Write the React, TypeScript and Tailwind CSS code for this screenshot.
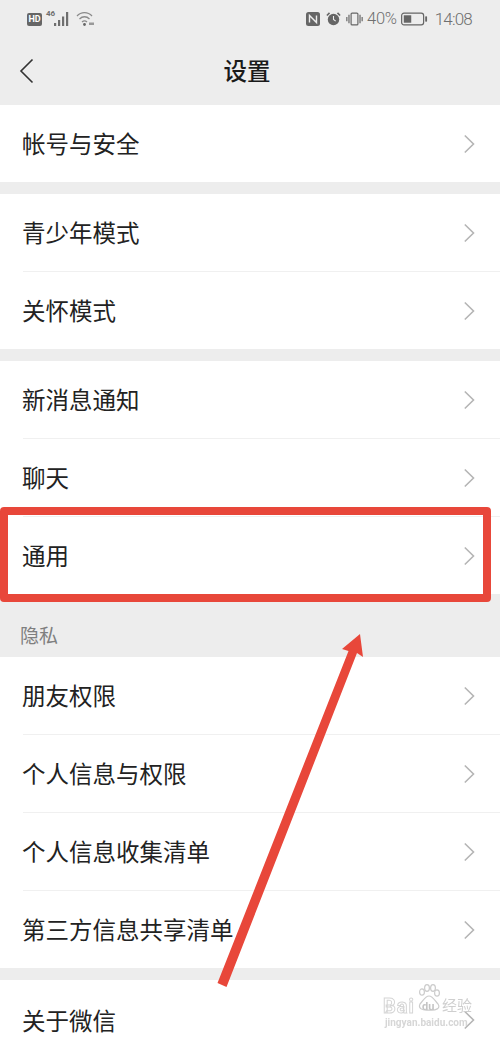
const FONT = "font-['Roboto','Noto_Sans_CJK_SC',sans-serif]";

function Chevron() {
  return (
    <svg width="12" height="20" viewBox="0 0 12 20" fill="none" className="shrink-0">
      <path d="M1.8 1.5 L10.5 10 L1.8 18.5" stroke="#b5b5b5" strokeWidth="1.6" />
    </svg>
  );
}

function Row({ label, divider = false, height = 'h-[77px]' }: { label: string; divider?: boolean; height?: string }) {
  return (
    <div className={`bg-white pl-[23px] ${height}`}>
      <div className={`h-full flex items-center justify-between pr-[25px] ${divider ? 'border-b border-[#f0f0f0]' : ''}`}>
        <span className="text-[23.5px] leading-none text-[#222222] -ml-[1px] pt-[5px]">{label}</span>
        <Chevron />
      </div>
    </div>
  );
}

function StatusBar() {
  return (
    <div className="h-[38px] flex items-center justify-between pl-[27px] pr-[28px] text-[#6f6f6f]">
      <div className="flex items-center gap-[4px]">
        <span className="w-[15px] h-[13px] rounded-[2px] bg-[#666666] text-white text-[9px] font-bold leading-[13px] text-center">HD</span>
        <div className="relative w-[24px] h-[16px]">
          <span className="absolute left-[0px] top-[-2px] text-[8px] font-bold leading-[10px]">46</span>
          <svg width="24" height="16" viewBox="0 0 24 16" className="absolute left-0 top-0" fill="#6f6f6f">
            <rect x="8" y="12" width="2.2" height="3" />
            <rect x="12" y="9" width="2.2" height="6" />
            <rect x="16" y="5.5" width="2.2" height="9.5" />
            <rect x="20" y="1" width="2.2" height="14" />
          </svg>
        </div>
        <svg width="20" height="16" viewBox="0 0 20 16" fill="none" stroke="#8a8a8a" strokeWidth="1.3" className="ml-[2px]">
          <path d="M1 5 C5 0.5 12 0.5 16 5" />
          <path d="M3.5 8 C6.5 5 10.5 5 13.5 8" />
          <path d="M6 11 C7.5 9.6 9.5 9.6 11 11" />
          <circle cx="8.5" cy="13.5" r="1.4" fill="#666666" stroke="none" />
          <rect x="13" y="11.5" width="5" height="2.5" fill="#999999" stroke="none" />
        </svg>
      </div>
      <div className="flex items-center text-[16px] leading-none">
        <svg width="14" height="14" viewBox="0 0 14 14" className="mr-[6px]">
          <rect width="14" height="14" rx="2.5" fill="#666666" />
          <path d="M3.5 10.5 V3.5 L10.5 10.5 V3.5" fill="none" stroke="#ededed" strokeWidth="1.4" />
        </svg>
        <svg width="15" height="16" viewBox="0 0 17 16" className="mr-[5px]">
          <circle cx="8.5" cy="8.5" r="6.5" fill="#666666" />
          <path d="M8.5 4.5 V8.5 L11 10.5" fill="none" stroke="#ededed" strokeWidth="1.2" />
          <path d="M1 4 L4 1 M16 4 L13 1" stroke="#666666" strokeWidth="1.8" />
        </svg>
        <svg width="17" height="16" viewBox="0 0 20 16" fill="none" stroke="#666666" className="mr-[4px]">
          <rect x="6" y="1" width="8" height="14" rx="1.2" strokeWidth="1.4" />
          <path d="M3.5 3 V13 M1 5.5 V10.5 M16.5 3 V13 M19 5.5 V10.5" strokeWidth="1.4" />
        </svg>
        <span className="font-light text-[16.5px] tracking-[-0.3px]">40%</span>
        <svg width="27" height="14" viewBox="0 0 29 14" fill="none" className="ml-[4px] mr-[7px]">
          <rect x="0.7" y="0.7" width="23.6" height="12.6" rx="2.5" stroke="#666666" strokeWidth="1.3" />
          <rect x="3" y="3" width="8" height="8" fill="#666666" />
          <rect x="26" y="4" width="2" height="6" rx="0.8" fill="#666666" />
        </svg>
        <span className="font-light text-[17px] tracking-[-0.8px]">14:08</span>
      </div>
    </div>
  );
}

function Header() {
  return (
    <div className="relative h-[67px] flex items-center justify-center">
      <svg width="16" height="26" viewBox="0 0 16 26" fill="none" className="absolute left-[19px] top-[20px]">
        <path d="M13.5 1.5 L2 13 L13.5 24.5" stroke="#333333" strokeWidth="1.6" />
      </svg>
      <span className="text-[23.5px] leading-none font-medium text-[#1a1a1a] pt-[3px] -translate-x-[3px]">设置</span>
    </div>
  );
}

function Overlays() {
  return (
    <>
      {/* red highlight */}
      <div className="absolute left-0 top-[507px] w-[491px] h-[95px] border-[8px] border-[#e8473a] rounded-[4px]" />
      {/* arrow */}
      <svg width="500" height="1039" viewBox="0 0 500 1039" className="absolute left-0 top-0 pointer-events-none">
        <polygon points="217.5,983 226.5,987 357,653 363,657 360,634 342,649 348.5,651" fill="#e8473a" />
      </svg>
      {/* watermark */}
      <div className="absolute left-[383px] top-[984px] w-[117px] h-[55px] blur-[0.4px]">
        <svg width="24" height="28" viewBox="0 0 24 28" className="absolute left-[34px] top-[0px]" fill="#ffffff" stroke="#cccccc" strokeWidth="1.2">
          <ellipse cx="5" cy="8" rx="2.4" ry="3.2" />
          <ellipse cx="10" cy="4" rx="2.4" ry="3.4" />
          <ellipse cx="16" cy="4" rx="2.4" ry="3.4" />
          <ellipse cx="20" cy="9" rx="2.4" ry="3.2" />
          <path d="M12 12 C8 12 6 17 3 20 C1 24 5 27 12 26 C19 27 24 24 21 20 C18 17 16 12 12 12 Z" />
        </svg>
        <span className="absolute left-0 top-[12px] text-[20px] leading-none font-bold tracking-[1px] text-white [-webkit-text-stroke:1px_#d6d6d6]">Bai</span>
        <span className="absolute left-[39px] top-[17px] text-[11px] leading-none font-bold text-[#c4c4c4]">du</span>
        <span className="absolute left-[59px] top-[15px] text-[15px] leading-none text-[#cfcfcf]">经验</span>
        <span className="absolute left-[2px] top-[34px] text-[10px] leading-none font-bold text-[#d6d6d6]">jingyan.baidu.com</span>
      </div>
    </>
  );
}

export default function App() {
  return (
    <div className={`relative w-[500px] h-[1039px] overflow-hidden bg-[#ededed] ${FONT}`}>
      <StatusBar />
      <Header />
      <Row label="帐号与安全" />
      <div className="h-[12px]" />
      <Row label="青少年模式" divider height="h-[78px]" />
      <Row label="关怀模式" />
      <div className="h-[12px]" />
      <Row label="新消息通知" divider height="h-[78px]" />
      <Row label="聊天" divider height="h-[78px]" />
      <Row label="通用" height="h-[77px]" />
      <div className="h-[63px] pl-[20px] pt-[33px] text-[19px] leading-none text-[#7f7f7f]">隐私</div>
      <Row label="朋友权限" divider height="h-[78px]" />
      <Row label="个人信息与权限" divider height="h-[78px]" />
      <Row label="个人信息收集清单" divider height="h-[78px]" />
      <Row label="第三方信息共享清单" height="h-[77px]" />
      <div className="h-[12px]" />
      <Row label="关于微信" height="h-[80px]" />
      <Overlays />
    </div>
  );
}
